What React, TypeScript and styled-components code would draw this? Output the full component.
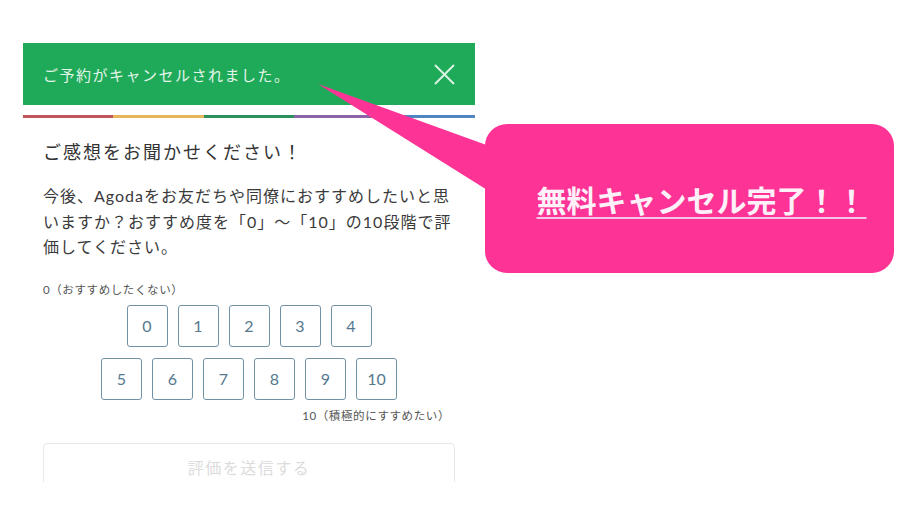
import React from 'react';
import styled, { createGlobalStyle } from 'styled-components';

const GlobalStyle = createGlobalStyle`
  html, body {
    margin: 0;
    padding: 0;
    background: #ffffff;
  }
  body {
    font-family: Lato, "Noto Sans CJK JP", sans-serif;
  }
`;

const STRIPE_COLORS = ['#c0555a', '#e7b55c', '#2f8f5c', '#8e63a8', '#4f86c1'];
const SCORES_TOP = [0, 1, 2, 3, 4];
const SCORES_BOTTOM = [5, 6, 7, 8, 9, 10];

const Page = styled.div`
  position: relative;
  width: 906px;
  height: 526px;
  display: flex;
  align-items: flex-start;
  padding: 43px 0 0 23px;
  box-sizing: border-box;
  overflow: hidden;
`;

const Card = styled.div`
  flex-shrink: 0;
  width: 452px;
  height: 439px;
  overflow: hidden;
`;

const Banner = styled.div`
  height: 62px;
  background: #1faa59;
  display: flex;
  align-items: center;
  justify-content: space-between;
  padding: 0 19px 0 20px;
`;

const BannerText = styled.span`
  font-size: 15px;
  letter-spacing: 1.5px;
  color: #e4f5ea;
`;

const CloseButton = styled.button`
  border: none;
  background: none;
  padding: 0;
  width: 24px;
  height: 24px;
  display: flex;
  align-items: center;
  justify-content: center;
  cursor: pointer;
`;

const Stripe = styled.div`
  margin-top: 10px;
  height: 3px;
  display: flex;
`;

const StripeSegment = styled.div<{ $color: string }>`
  flex: 1;
  background: ${p => p.$color};
`;

const Body = styled.div`
  padding: 0 20px;
  display: flex;
  flex-direction: column;
  color: #333333;
`;

const Title = styled.h2`
  margin: 21px 0 0;
  font-size: 18px;
  line-height: 26px;
  font-weight: 400;
  letter-spacing: 2px;
  color: #333333;
`;

const Question = styled.p`
  margin: 18px 0 0;
  font-size: 16px;
  line-height: 25.5px;
  letter-spacing: 1px;
  white-space: nowrap;
  color: #3a3a3a;
`;

const ScaleLabel = styled.div<{ $align: 'left' | 'right' }>`
  font-size: 11.5px;
  line-height: 16px;
  color: #555555;
  letter-spacing: 0.6px;
  text-align: ${p => p.$align};
  margin: ${p => (p.$align === 'left' ? '22px 0 0' : '8px 5px 0 0')};
`;

const ScoreRow = styled.div<{ $first?: boolean }>`
  display: flex;
  justify-content: center;
  gap: 10px;
  margin-top: ${p => (p.$first ? '7px' : '11px')};
`;

const ScoreButton = styled.button`
  width: 41px;
  height: 42px;
  padding: 0;
  border: 1px solid #7192a6;
  border-radius: 3px;
  background: #ffffff;
  color: #55798f;
  font-family: Lato, "Noto Sans CJK JP", sans-serif;
  font-size: 16px;
  cursor: pointer;
`;

const SubmitButton = styled.button`
  flex-shrink: 0;
  margin-top: 19px;
  height: 48px;
  border: 1px solid #e8e8e8;
  border-radius: 4px;
  background: #ffffff;
  color: #dcdcdc;
  font-family: Lato, "Noto Sans CJK JP", sans-serif;
  font-size: 16px;
  letter-spacing: 1.5px;
`;

const Callout = styled.div`
  flex-shrink: 0;
  margin: 81px 0 0 10px;
  width: 409px;
  height: 149px;
  border-radius: 22px;
  background: #fe3396;
  display: flex;
  align-items: center;
  justify-content: center;
  padding-left: 24px;
  box-sizing: border-box;
`;

const CalloutText = styled.span`
  font-family: "Noto Sans CJK JP", sans-serif;
  font-size: 30px;
  font-weight: 700;
  color: #fdf0f8;
  text-decoration: underline;
  text-decoration-color: #f6c4e6;
  text-decoration-thickness: 2px;
  text-underline-offset: 5px;
  letter-spacing: 0;
`;

const Pointer = styled.svg`
  position: absolute;
  left: 0;
  top: 0;
  pointer-events: none;
`;

export default function App() {
  return (
    <>
      <GlobalStyle />
      <Page>
        <Card>
          <Banner>
            <BannerText>ご予約がキャンセルされました。</BannerText>
            <CloseButton aria-label="閉じる">
              <svg width="21" height="21" viewBox="0 0 21 21">
                <path d="M1 1L20 20M20 1L1 20" stroke="#d9f3e2" strokeWidth="2" />
              </svg>
            </CloseButton>
          </Banner>
          <Stripe>
            {STRIPE_COLORS.map(c => (
              <StripeSegment key={c} $color={c} />
            ))}
          </Stripe>
          <Body>
            <Title>ご感想をお聞かせください！</Title>
            <Question>
              今後、Agodaをお友だちや同僚におすすめしたいと思
              <br />
              いますか？おすすめ度を「0」〜「10」の10段階で評
              <br />
              価してください。
            </Question>
            <ScaleLabel $align="left">0（おすすめしたくない）</ScaleLabel>
            <ScoreRow $first>
              {SCORES_TOP.map(n => (
                <ScoreButton key={n}>{n}</ScoreButton>
              ))}
            </ScoreRow>
            <ScoreRow>
              {SCORES_BOTTOM.map(n => (
                <ScoreButton key={n}>{n}</ScoreButton>
              ))}
            </ScoreRow>
            <ScaleLabel $align="right">10（積極的にすすめたい）</ScaleLabel>
            <SubmitButton disabled>評価を送信する</SubmitButton>
          </Body>
        </Card>
        <Callout>
          <CalloutText>無料キャンセル完了！！</CalloutText>
        </Callout>
        <Pointer width="906" height="526" viewBox="0 0 906 526">
          <polygon points="318,84 492,147 492,193" fill="#fe3396" />
        </Pointer>
      </Page>
    </>
  );
}
